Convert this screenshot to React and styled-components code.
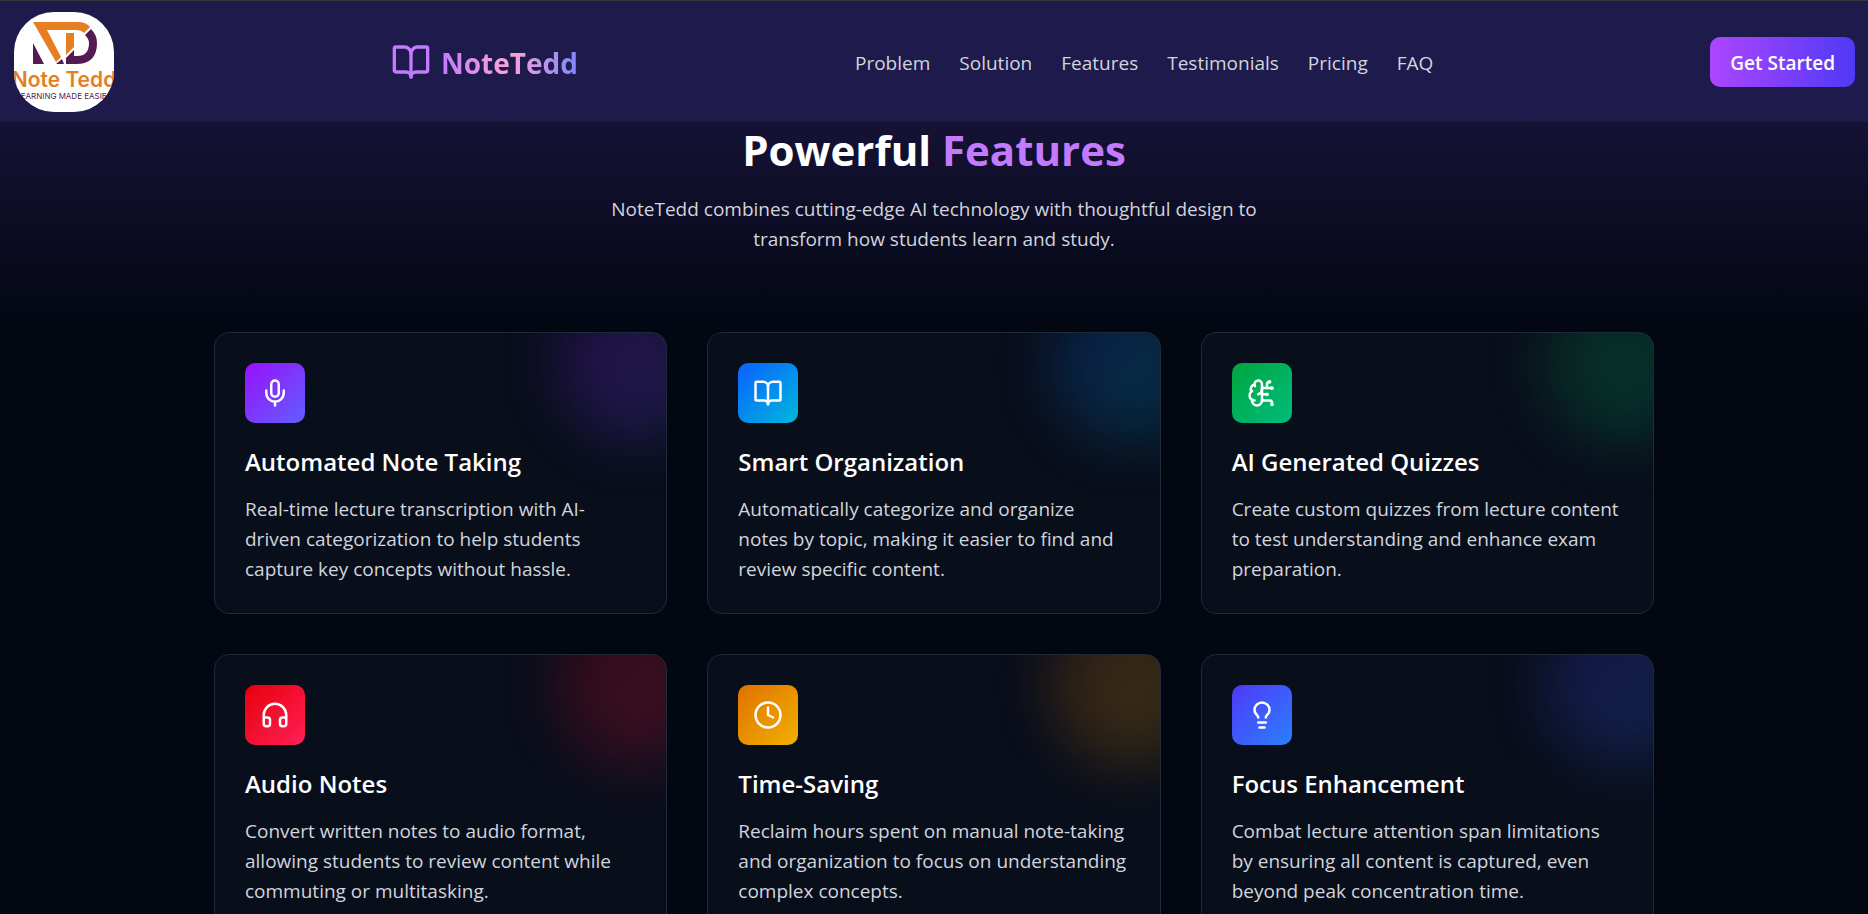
import React from "react";
import styled, { createGlobalStyle } from "styled-components";
import { BookOpen, BrainCircuit, Clock, Headphones, Lightbulb, Mic } from "lucide-react";

const GlobalStyle = createGlobalStyle`
  *, *::before, *::after { box-sizing: border-box; }
  body {
    margin: 0;
    background: #030712;
    color: #fff;
    font-family: "Open Sans", "Noto Sans", sans-serif;
    font-size: 19px;
    line-height: 30px;
  }
  html { overflow-x: hidden; scrollbar-width: none; }
`;

const Page = styled.div`
  min-height: 100vh;
  border-top: 1px solid #38383c;
`;

const Header = styled.header`
  position: sticky;
  top: 0;
  z-index: 10;
  display: flex;
  align-items: center;
  justify-content: space-between;
  padding: 11px 13px 10px 14px;
  background: #1e1a4b;
`;

const Badge = styled.svg`
  display: block;
  width: 100px;
  height: 100px;
  border-radius: 40px;
  background: #fff;
`;

const Brand = styled.a`
  display: flex;
  align-items: center;
  gap: 10px;
  color: #c27aff;
  text-decoration: none;
`;

const BrandName = styled.span`
  padding-top: 2px;
  font-size: 28px;
  line-height: 40px;
  font-weight: 700;
  color: transparent;
  background: linear-gradient(to right, #c27aff, #fda5d5, #7c86ff);
  background-clip: text;
`;

const Nav = styled.nav`
  display: flex;
  gap: 29px;
  padding-top: 2px;
`;

const NavLink = styled.a`
  color: #d1d5dc;
  text-decoration: none;
`;

const StartButton = styled.button`
  padding: 11px 20px 9px;
  border: 0;
  border-radius: 10px;
  background: linear-gradient(to right, #ad46ff, #4f39f6);
  color: #fff;
  font: inherit;
  font-weight: 600;
  cursor: pointer;
`;

const Section = styled.section`
  padding: 2px 0 80px;
  background: linear-gradient(to bottom, #151235, #030712 208px);
`;

const Intro = styled.div`
  max-width: 720px;
  margin: 0 auto;
  padding-bottom: 78px;
  text-align: center;
`;

const Heading = styled.h2`
  margin: 0 0 19px;
  font-size: 42px;
  line-height: 51px;
  font-weight: 700;
`;

const Accent = styled.span`
  color: #c27aff;
`;

const Lead = styled.p`
  margin: 0;
  color: #d1d5dc;
`;

const CardGrid = styled.div`
  display: grid;
  grid-template-columns: repeat(3, 1fr);
  gap: 40px;
  max-width: 1440px;
  margin: 0 auto;
`;

const Card = styled.article`
  position: relative;
  overflow: hidden;
  padding: 30px 32px 29px 30px;
  border: 1px solid #1e2939;
  border-radius: 15px;
  background: #090e1b;
`;

const Glow = styled.div`
  position: absolute;
  top: -50px;
  right: -50px;
  width: 160px;
  height: 160px;
  border-radius: 50%;
  background: linear-gradient(to bottom right, ${(p) => p.$from}, ${(p) => p.$to});
  opacity: 0.2;
  filter: blur(30px);
`;

const IconTile = styled.div`
  display: flex;
  align-items: center;
  justify-content: center;
  width: 60px;
  height: 60px;
  margin-bottom: 21px;
  border-radius: 10px;
  background: linear-gradient(to bottom right, ${(p) => p.$from}, ${(p) => p.$to});
`;

const CardTitle = styled.h3`
  margin: 0 0 15px;
  font-size: 24px;
  line-height: 35px;
  font-weight: 600;
`;

const CardText = styled.p`
  margin: 0;
  color: #d1d5dc;
`;

const links = ["Problem", "Solution", "Features", "Testimonials", "Pricing", "FAQ"];

const features = [
  {
    icon: Mic, from: "#9810fa", to: "#615fff", title: "Automated Note Taking",
    text: "Real-time lecture transcription with AI-driven categorization to help students capture key concepts without hassle.",
  },
  {
    icon: BookOpen, from: "#0a60ff", to: "#00b8db", title: "Smart Organization",
    text: "Automatically categorize and organize notes by topic, making it easier to find and review specific content.",
  },
  {
    icon: BrainCircuit, from: "#00a63e", to: "#00bc7d", title: "AI Generated Quizzes",
    text: "Create custom quizzes from lecture content to test understanding and enhance exam preparation.",
  },
  {
    icon: Headphones, from: "#e7000b", to: "#ff2056", title: "Audio Notes",
    text: "Convert written notes to audio format, allowing students to review content while commuting or multitasking.",
  },
  {
    icon: Clock, from: "#e17100", to: "#f0b100", title: "Time-Saving",
    text: "Reclaim hours spent on manual note-taking and organization to focus on understanding complex concepts.",
  },
  {
    icon: Lightbulb, from: "#4f39f6", to: "#2b7fff", title: "Focus Enhancement",
    text: "Combat lecture attention span limitations by ensuring all content is captured, even beyond peak concentration time.",
  },
];

function Logo() {
  return (
    <Badge viewBox="0 0 100 100" role="img" aria-label="Note Tedd">
      <path d="M19 10H64Q72 10 76 15L70 21Q67 18 62 18H33L47 45L42 50Z" fill="#e67e22" />
      <path d="M19 31L30 52H19Z" fill="#551a52" />
      <path d="M48 47L50 52H42Z" fill="#551a52" />
      <path d="M52 21H60V35L52 43Z" fill="#e67e22" />
      <path d="M77 17Q83 23 83 31Q83 52 62 52H52V46L60 38V44H63Q75 44 75 31Q75 27 71 23Z" fill="#551a52" />
      <text x="50" y="75" textAnchor="middle" fontFamily="Inter, sans-serif" fontWeight="600" fontSize="21" fill="#e67e22">Note Tedd</text>
      <text x="50" y="87" textAnchor="middle" fontFamily="Inter, sans-serif" fontSize="8" fill="#551a52">LEARNING MADE EASIER</text>
    </Badge>
  );
}

export default function App() {
  return (
    <Page>
      <GlobalStyle />
      <Header>
        <Logo />
        <Brand href="#home">
          <BookOpen size={40} />
          <BrandName>NoteTedd</BrandName>
        </Brand>
        <Nav>
          {links.map((name) => (
            <NavLink key={name} href={`#${name.toLowerCase()}`}>{name}</NavLink>
          ))}
        </Nav>
        <StartButton type="button">Get Started</StartButton>
      </Header>
      <Section id="features">
        <Intro>
          <Heading>Powerful <Accent>Features</Accent></Heading>
          <Lead>
            NoteTedd combines cutting-edge AI technology with thoughtful design to transform how students learn and study.
          </Lead>
        </Intro>
        <CardGrid>
          {features.map(({ icon: Icon, from, to, title, text }) => (
            <Card key={title}>
              <Glow $from={from} $to={to} />
              <IconTile $from={from} $to={to}>
                <Icon size={30} />
              </IconTile>
              <CardTitle>{title}</CardTitle>
              <CardText>{text}</CardText>
            </Card>
          ))}
        </CardGrid>
      </Section>
    </Page>
  );
}
